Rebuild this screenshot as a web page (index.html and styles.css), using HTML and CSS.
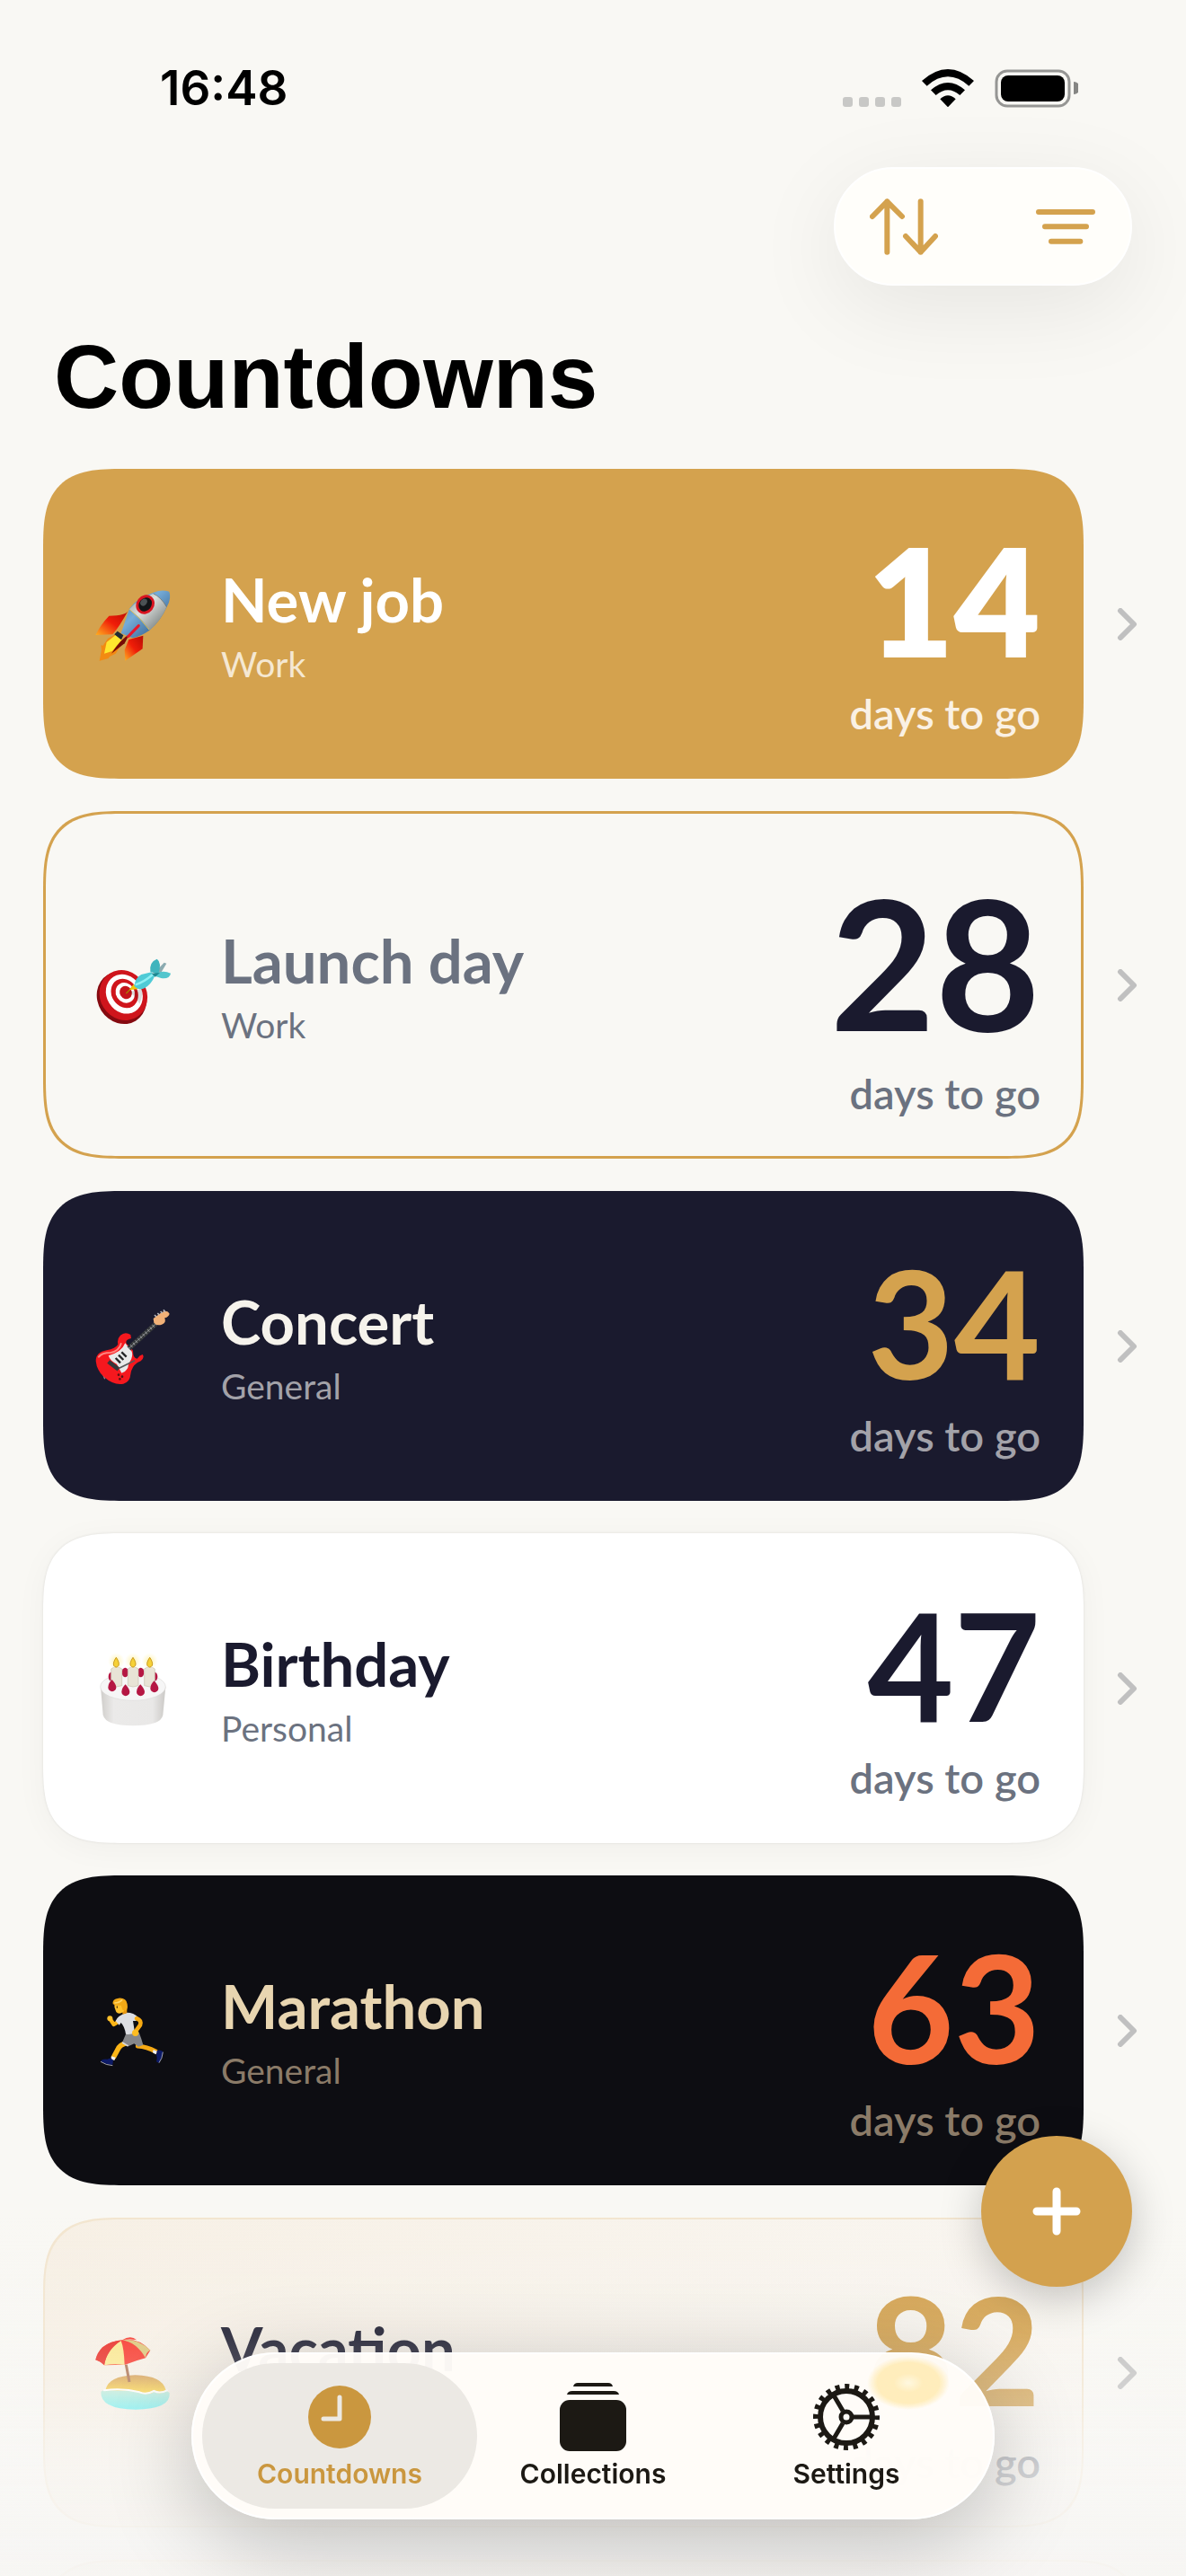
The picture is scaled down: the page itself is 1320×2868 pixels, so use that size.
FILE: index.html
```
<!DOCTYPE html>
<html lang="en">
<head>
    <meta charset="UTF-8">
    <meta name="viewport" content="width=device-width, initial-scale=1.0">
    <title>Countdowns</title>
    <link rel="stylesheet" href="styles.css">
</head>
<body>
    <div class="screen">
        <header class="status-bar">
            <span class="status-time">16:48</span>
            <div class="status-icons">
                <svg width="65" height="42" viewBox="0 0 65 42" fill="#c8c8c6">
                    <rect x="0" y="31" width="11" height="11" rx="3"/>
                    <rect x="18" y="31" width="11" height="11" rx="3"/>
                    <rect x="36" y="31" width="11" height="11" rx="3"/>
                    <rect x="54" y="31" width="11" height="11" rx="3"/>
                </svg>
                <svg width="58" height="42" viewBox="0 0 174 126">
                    <path d="M0 39Q87 -39 174 39L157 56Q87 -6 17 56Z"/>
                    <path d="M30 70Q87 20 144 70L127 87Q87 52 47 87Z"/>
                    <path d="M61 100Q87 76 113 100L87 127Z"/>
                </svg>
                <svg width="93" height="43" viewBox="0 0 93 43">
                    <rect x="2" y="2" width="81" height="39" rx="12" fill="none" stroke="#969694" stroke-width="3"/>
                    <rect x="7" y="7" width="71" height="29" rx="8"/>
                    <path d="M88 14a7 7 0 0 1 0 14z" fill="#868684"/>
                </svg>
            </div>
        </header>

        <div class="toolbar">
            <div class="toolbar-group">
                <button class="tool-btn" aria-label="Sort">
                    <svg width="76" height="63" viewBox="0 0 228 189">
                        <path d="M58 179V10M9 60L58 10L108 60M170 10V179M120 126L170 179L219 126"/>
                    </svg>
                </button>
                <button class="tool-btn" aria-label="Filter">
                    <svg width="76" height="63" viewBox="0 0 228 189">
                        <path d="M24 45H204M45 94H183M66 143H163"/>
                    </svg>
                </button>
            </div>
        </div>

        <h1 class="page-title">Countdowns</h1>

        <main class="list">
            <a class="row" href="#new-job">
                <article class="card card-gold">
                    <!-- rocket -->
                    <svg class="emoji" viewBox="54 14 300 300">
                        <defs>
                            <linearGradient id="hull" x1="0" y1="0" x2="1" y2="1">
                                <stop offset="0" stop-color="#8d9698"/>
                                <stop offset=".4" stop-color="#dcdfdc"/>
                                <stop offset="1" stop-color="#626b6b"/>
                            </linearGradient>
                            <linearGradient id="blue" x1="0" y1="0" x2="1" y2="1">
                                <stop offset="0" stop-color="#3c76b0"/>
                                <stop offset=".4" stop-color="#76acd8"/>
                                <stop offset="1" stop-color="#1d4674"/>
                            </linearGradient>
                            <linearGradient id="fin" x1="1" y1="0" x2="0" y2="1">
                                <stop offset="0" stop-color="#b80c04"/>
                                <stop offset=".5" stop-color="#f01d08"/>
                                <stop offset="1" stop-color="#ffb020"/>
                            </linearGradient>
                        </defs>
                        <path d="M188 118Q182 135 124 136Q96 165 79 200L136 198Q160 170 188 118Z" fill="url(#fin)"/>
                        <path d="M190 215L238 202L236 246L178 286L176 250Z" fill="url(#fin)"/>
                        <path d="M146 198L120 212L104 235L97 234L99 250L92 286L122 278L126 272L146 262L172 222Z" fill="#f28a12"/>
                        <path d="M146 200L116 224L108 262L134 254L168 218Z" fill="#ffe62e"/>
                        <path d="M192 112Q215 78 272 58Q300 47 325 55Q333 76 318 104Q296 154 258 185Q230 205 202 210L164 194Z" fill="url(#blue)"/>
                        <path d="M192 114Q222 78 272 62Q298 73 316 106Q298 150 260 184Q236 148 192 114Z" fill="url(#hull)"/>
                        <path d="M192 114Q230 144 258 182" fill="none" stroke="#e2c050" stroke-width="3"/>
                        <path d="M272 62Q298 74 316 106" fill="none" stroke="#70695b" stroke-width="2"/>
                        <path d="M142 198L152 187L172 201L165 216Z" fill="#1f2c34"/>
                        <path d="M132 262Q164 212 192 198L176 228Z" fill="#780a04"/>
                        <path d="M188 205L223 169" stroke="#e8182a" stroke-width="9" stroke-linecap="round"/>
                        <ellipse cx="245" cy="98" rx="25" ry="29" transform="rotate(38 245 98)" fill="#121517" stroke="#d81420" stroke-width="9"/>
                        <ellipse cx="240" cy="91" rx="10" ry="13" transform="rotate(38 240 91)" fill="#4b5254"/>
                    </svg>
                    <div class="info">
                        <h2 class="name">New job</h2>
                        <p class="category">Work</p>
                    </div>
                    <div class="count">
                        <span class="number">14</span>
                        <span class="unit">days to go</span>
                    </div>
                </article>
                <svg class="chevron" viewBox="0 0 36 36"><path d="M11 3L26 18L11 33"/></svg>
            </a>

            <a class="row" href="#launch-day">
                <article class="card card-outline">
                    <!-- target with dart -->
                    <svg class="emoji" viewBox="54 20 300 300">
                        <ellipse cx="166" cy="212" rx="80" ry="90" transform="rotate(-32 166 212)" fill="#850a10"/>
                        <ellipse cx="172" cy="203" rx="78" ry="86" transform="rotate(-32 172 203)" fill="#cf151c"/>
                        <ellipse cx="175" cy="199" rx="59" ry="68" transform="rotate(-32 175 199)" fill="#fff"/>
                        <ellipse cx="176" cy="197" rx="43" ry="51" transform="rotate(-32 176 197)" fill="#cf151c"/>
                        <ellipse cx="178" cy="195" rx="31" ry="35" transform="rotate(-32 178 195)" fill="#fff"/>
                        <ellipse cx="180" cy="194" rx="20" ry="22" transform="rotate(-32 180 194)" fill="#c4141b"/>
                        <path d="M190 190Q218 190 232 178Q240 200 226 232Q214 208 190 190Z" fill="#000" opacity=".14"/>
                        <path d="M182 196L206 172" stroke="#a87f00" stroke-width="4" stroke-linecap="round"/>
                        <path d="M192 186L206 166L222 182Z" fill="#f0c60c"/>
                        <path d="M208 172Q212 144 232 134L266 126L276 140Q266 166 242 180Q222 188 208 172Z" fill="#4fcbd6"/>
                        <path d="M212 168Q240 160 270 134" fill="none" stroke="#8ff0f4" stroke-width="7"/>
                        <path d="M276 128L308 94L316 97L294 134Z" fill="#8babb0"/>
                        <path d="M262 124Q258 92 284 82Q302 94 288 134Z" fill="#3fb4bd"/>
                        <path d="M272 138Q298 116 330 130Q326 150 298 146Z" fill="#53c6cd"/>
                        <path d="M266 130L294 128L278 142Z" fill="#1f8891"/>
                    </svg>
                    <div class="info">
                        <h2 class="name">Launch day</h2>
                        <p class="category">Work</p>
                    </div>
                    <div class="count">
                        <span class="number number-large">28</span>
                        <span class="unit">days to go</span>
                    </div>
                </article>
                <svg class="chevron" viewBox="0 0 36 36"><path d="M11 3L26 18L11 33"/></svg>
            </a>

            <a class="row" href="#concert">
                <article class="card card-navy">
                    <!-- guitar -->
                    <svg class="emoji" viewBox="54 55 300 300">
                        <path d="M104 298L110 314" stroke="#8a8a90" stroke-width="4"/>
                        <path d="M196 166Q178 154 162 168Q150 180 154 198Q146 212 116 218Q80 224 80 254Q82 284 108 308Q140 336 172 330Q194 324 196 298Q200 266 230 254Q244 242 236 232Q226 234 218 246Q204 246 204 220Q196 204 184 198Q174 184 198 178Z" fill="#f5181e"/>
                        <path d="M90 240Q100 226 130 226Q158 220 164 196" fill="none" stroke="#ff8580" stroke-width="6" stroke-linecap="round"/>
                        <path d="M178 194Q166 224 122 236Q128 254 150 264L166 294Q188 288 190 262Q206 240 200 222Z" fill="#e8e9ea"/>
                        <path d="M190 212L280 130" stroke="#323538" stroke-width="17"/>
                        <path d="M190 212L280 130" stroke="#a3a5a6" stroke-width="11" stroke-dasharray="2 9"/>
                        <path d="M190 212L280 130" stroke="#b5b7b8" stroke-width="2"/>
                        <path d="M166 224L182 240M156 234L172 250M146 244L162 260" stroke="#242629" stroke-width="7"/>
                        <path d="M122 256L156 282" stroke="#35373b" stroke-width="14"/>
                        <path d="M158 278L210 252" stroke="#58595c" stroke-width="5"/>
                        <path d="M272 112L296 94Q318 80 326 96Q324 106 310 110Q316 128 300 132Q284 138 274 126Z" fill="#f0b077"/>
                        <path d="M276 100L282 106M286 94L292 100M296 88L302 94M306 83L311 90" stroke="#b8b8bd" stroke-width="5"/>
                        <circle cx="156" cy="300" r="4" fill="#5c1013"/>
                        <circle cx="168" cy="306" r="4" fill="#5c1013"/>
                        <circle cx="160" cy="314" r="4" fill="#5c1013"/>
                    </svg>
                    <div class="info">
                        <h2 class="name">Concert</h2>
                        <p class="category">General</p>
                    </div>
                    <div class="count">
                        <span class="number">34</span>
                        <span class="unit">days to go</span>
                    </div>
                </article>
                <svg class="chevron" viewBox="0 0 36 36"><path d="M11 3L26 18L11 33"/></svg>
            </a>

            <a class="row" href="#birthday">
                <article class="card card-white">
                    <!-- cake -->
                    <svg class="emoji" viewBox="54 58 300 300">
                        <defs>
                            <linearGradient id="cake" x1="0" y1="0" x2="1" y2="0">
                                <stop offset="0" stop-color="#cfcdca"/>
                                <stop offset=".2" stop-color="#ebeae9"/>
                                <stop offset=".8" stop-color="#e9e8e7"/>
                                <stop offset="1" stop-color="#cbc9c6"/>
                            </linearGradient>
                            <radialGradient id="glow">
                                <stop offset="0" stop-color="#fff09a"/>
                                <stop offset="1" stop-color="#fff8d0" stop-opacity="0"/>
                            </radialGradient>
                        </defs>
                        <path d="M96 202L104 296Q112 332 204 332Q298 332 304 296L313 202Z" fill="url(#cake)"/>
                        <ellipse cx="204" cy="202" rx="109" ry="46" fill="#f6f6f6" stroke="#dddbd9" stroke-width="2"/>
                        <g fill="#b51743">
                            <ellipse cx="132" cy="168" rx="10" ry="15"/>
                            <ellipse cx="178" cy="154" rx="11" ry="16"/>
                            <ellipse cx="230" cy="154" rx="11" ry="16"/>
                            <ellipse cx="276" cy="168" rx="10" ry="15"/>
                        </g>
                        <g fill="#e8e4d6" stroke="#c7c2b1" stroke-width="2">
                            <path d="M131 142Q148 128 167 142V198Q148 206 131 198Z"/>
                            <path d="M187 142Q204 128 222 142V198Q204 206 187 198Z"/>
                            <path d="M242 142Q260 128 277 142V198Q260 206 242 198Z"/>
                        </g>
                        <g fill="#b51743">
                            <path d="M134 178Q148 194 148 204A13 13 0 0 1 121 204Q121 190 134 178Z"/>
                            <path d="M179 194Q193 210 193 219A13 13 0 0 1 166 219Q166 206 179 194Z"/>
                            <path d="M229 194Q243 210 243 219A13 13 0 0 1 216 219Q216 206 229 194Z"/>
                            <path d="M275 182Q289 198 289 207A13 13 0 0 1 262 207Q262 194 275 182Z"/>
                        </g>
                        <circle cx="148" cy="116" r="28" fill="url(#glow)"/>
                        <circle cx="204" cy="116" r="28" fill="url(#glow)"/>
                        <circle cx="260" cy="116" r="28" fill="url(#glow)"/>
                        <g fill="#f6d136" stroke="#c9981c" stroke-width="3">
                            <path d="M148 104Q160 122 156 131Q148 142 140 131Q136 122 148 104Z"/>
                            <path d="M204 104Q216 122 212 131Q204 142 196 131Q192 122 204 104Z"/>
                            <path d="M260 104Q272 122 268 131Q260 142 252 131Q248 122 260 104Z"/>
                        </g>
                    </svg>
                    <div class="info">
                        <h2 class="name">Birthday</h2>
                        <p class="category">Personal</p>
                    </div>
                    <div class="count">
                        <span class="number">47</span>
                        <span class="unit">days to go</span>
                    </div>
                </article>
                <svg class="chevron" viewBox="0 0 36 36"><path d="M11 3L26 18L11 33"/></svg>
            </a>

            <a class="row" href="#marathon">
                <article class="card card-black">
                    <!-- runner -->
                    <svg class="emoji" viewBox="54 61 300 300">
                        <path d="M220 262Q250 264 280 280" fill="none" stroke="#f5a914" stroke-width="15" stroke-linecap="round"/>
                        <path d="M180 252Q160 258 154 272L140 298" fill="none" stroke="#fbb517" stroke-width="17" stroke-linecap="round"/>
                        <path d="M272 274L286 280L280 290L270 284ZM132 296L146 300L142 310L130 306Z" fill="#f0f0f4"/>
                        <path d="M284 278Q292 272 304 280Q302 304 290 318L282 314Q286 300 282 292Z" fill="#0d1a66"/>
                        <path d="M304 282Q302 304 291 318" fill="none" stroke="#e8e8f0" stroke-width="2"/>
                        <path d="M96 312Q102 304 118 306L130 302L138 310L136 324Q114 324 96 312Z" fill="#0d1a66"/>
                        <path d="M96 314Q114 326 136 327" fill="none" stroke="#e8e8f0" stroke-width="2"/>
                        <path d="M180 222L224 216Q232 236 238 258L222 264L208 254L190 262L168 250Z" fill="#86878a"/>
                        <path d="M168 250L188 262" stroke="#d8d8da" stroke-width="5"/>
                        <path d="M162 176L140 190L128 172" fill="none" stroke="#fbb517" stroke-width="13" stroke-linejoin="round"/>
                        <circle cx="127" cy="170" r="9" fill="#ffc02a"/>
                        <path d="M146 178Q152 160 184 150Q206 150 222 166L214 178L204 178L210 216Q196 226 180 222Q176 196 164 184L158 192Z" fill="#dcdde2"/>
                        <path d="M216 170Q234 176 228 192L212 214" fill="none" stroke="#f7aa12" stroke-width="14" stroke-linecap="round"/>
                        <circle cx="212" cy="218" r="11" fill="#ffbd22"/>
                        <path d="M166 136L184 138L184 152L170 156Z" fill="#e8960e"/>
                        <path d="M142 118Q140 134 148 148Q156 158 172 148L182 128L170 108Z" fill="#ffc02a"/>
                        <path d="M137 122Q134 104 156 102Q182 100 185 122Q188 140 180 144L170 142L164 126Q150 128 137 122Z" fill="#f2a916"/>
                        <path d="M142 118Q158 118 168 108" fill="none" stroke="#ffd667" stroke-width="5"/>
                        <ellipse cx="151" cy="132" rx="2" ry="4" fill="#5a3708"/>
                    </svg>
                    <div class="info">
                        <h2 class="name">Marathon</h2>
                        <p class="category">General</p>
                    </div>
                    <div class="count">
                        <span class="number">63</span>
                        <span class="unit">days to go</span>
                    </div>
                </article>
                <svg class="chevron" viewBox="0 0 36 36"><path d="M11 3L26 18L11 33"/></svg>
            </a>

            <a class="row" href="#vacation">
                <article class="card card-sand">
                    <!-- beach umbrella -->
                    <svg class="emoji" viewBox="54 64 300 300">
                        <defs>
                            <linearGradient id="sea" x1="0" y1="0" x2="0" y2="1">
                                <stop offset="0" stop-color="#cfe9d2"/>
                                <stop offset="1" stop-color="#6bf0f2"/>
                            </linearGradient>
                            <linearGradient id="sand" x1="0" y1="0" x2="0" y2="1">
                                <stop offset="0" stop-color="#d39a52"/>
                                <stop offset="1" stop-color="#ffd83c"/>
                            </linearGradient>
                        </defs>
                        <path d="M97 276Q118 262 212 260Q304 262 326 280Q332 334 212 336Q94 334 97 276Z" fill="url(#sea)"/>
                        <path d="M112 272Q120 224 212 221Q304 224 314 272Q296 288 276 276Q254 290 232 278Q170 270 112 272Z" fill="url(#sand)"/>
                        <path d="M108 272Q170 264 226 278Q248 288 274 274Q294 284 318 272" fill="none" stroke="#fff" stroke-width="6" stroke-linecap="round"/>
                        <path d="M181 186L192 244" stroke="#a86a48" stroke-width="9"/>
                        <path d="M79 170Q98 112 164 104Q222 94 262 138L246 164Q216 172 178 186Q146 186 108 188Q96 176 79 170Z" fill="#f83226"/>
                        <path d="M164 106Q116 134 108 188Q142 182 176 187Q174 130 164 106Z" fill="#fbe88e"/>
                        <path d="M164 106Q130 106 102 128Q84 146 79 170Q92 172 108 188Q116 138 164 106Z" fill="#e92820"/>
                        <path d="M168 104Q200 100 228 114Q248 122 262 138Q246 144 246 164Q216 112 168 104Z" fill="#dcc678"/>
                        <path d="M168 104Q196 86 216 103Q190 100 168 104Z" fill="#f83226"/>
                    </svg>
                    <div class="info">
                        <h2 class="name">Vacation</h2>
                    </div>
                    <div class="count">
                        <span class="number">82</span>
                        <span class="unit">days to go</span>
                    </div>
                </article>
                <svg class="chevron" viewBox="0 0 36 36"><path d="M11 3L26 18L11 33"/></svg>
            </a>

            <div class="row">
                <article class="card card-sand"></article>
            </div>
        </main>
    </div>

    <div class="fade"></div>

    <button class="fab" aria-label="Add countdown">
        <svg width="54" height="54" viewBox="0 0 54 54"><path d="M27 5V49M5 27H49"/></svg>
    </button>

    <nav class="tab-bar">
        <a class="tab tab-active" href="#countdowns">
            <svg width="76" height="78" viewBox="0 0 76 78">
                <circle cx="38" cy="39" r="35" fill="#ca973f"/>
                <path d="M38 17V41H20" fill="none" stroke="#ece9e4" stroke-width="5" stroke-linecap="round" stroke-linejoin="round"/>
            </svg>
            <span>Countdowns</span>
        </a>
        <a class="tab" href="#collections">
            <svg width="76" height="78" viewBox="0 0 76 78" fill="#1c1914">
                <path d="M16 5Q17 1 21 1H55Q59 1 60 5ZM9 14Q10 10 15 10H61Q66 10 67 14Z"/>
                <rect x="1" y="20" width="74" height="57" rx="11"/>
            </svg>
            <span>Collections</span>
        </a>
        <a class="tab" href="#settings">
            <svg width="76" height="78" viewBox="-38 -39 76 78" fill="none" stroke="#1c1914">
                <circle r="34" stroke-width="6" stroke-dasharray="5 5.68" stroke-dashoffset="2"/>
                <circle r="29" stroke-width="6"/>
                <circle r="6" stroke-width="5"/>
                <path d="M8 0H27M-4 -7L-14 -24M-4 7L-14 24" stroke-width="5"/>
            </svg>
            <span>Settings</span>
        </a>
    </nav>
</body>
</html>
```
FILE: styles.css
```
*{
    margin: 0;
    padding: 0;
    box-sizing: border-box;
}
body{
    background-color: #f9f8f4;
    color: #000;
    font-family: Lato, "Liberation Sans", sans-serif;
}
a{
    color: inherit;
    text-decoration: none;
}
button{
    border: none;
    background: none;
    cursor: pointer;
}
.screen{
    height: 100vh;
    overflow: hidden;
    padding: 0 48px;
}

/* status bar */
.status-bar{
    display: flex;
    justify-content: space-between;
    align-items: center;
    height: 186px;
    padding: 10px 72px 0 130px;
}
.status-time{
    font-family: Inter, sans-serif;
    font-size: 53px;
    font-weight: 600;
}
.status-icons{
    display: flex;
    align-items: center;
    gap: 23px;
}

/* toolbar */
.toolbar{
    display: flex;
    justify-content: flex-end;
    padding-right: 12px;
}
.toolbar-group{
    display: flex;
    justify-content: space-between;
    align-items: center;
    width: 332px;
    height: 132px;
    padding: 0 34px 0 38px;
    border: 2px solid #fff;
    border-radius: 66px;
    background: #fffefa;
    box-shadow: 0 24px 100px rgba(0,0,0,.08);
}
.tool-btn{
    display: flex;
}
.tool-btn path{
    fill: none;
    stroke: #d4a24e;
    stroke-width: 18;
    stroke-linecap: round;
    stroke-linejoin: round;
}
.page-title{
    padding: 40px 12px 42px;
    font-family: "Liberation Sans", Arial, sans-serif;
    font-size: 100px;
    font-weight: 700;
    line-height: 122px;
}

/* list */
.list{
    display: flex;
    flex-direction: column;
    gap: 36px;
}
.row{
    display: flex;
    align-items: center;
    gap: 30px;
}
.card{
    flex: 1;
    display: flex;
    align-items: center;
    min-height: 345px;
    padding: 0 48px 0 50px;
    border-radius: 66px;
}
@supports (corner-shape: superellipse(1.6)){
    .card{
        border-radius: 90px;
        corner-shape: superellipse(1.6);
    }
}
.emoji{
    width: 100px;
    height: 100px;
}
.info{
    flex: 1;
    min-height: 144px;
    padding-left: 48px;
}
.name{
    font-size: 67px;
    font-weight: 700;
    line-height: 88px;
}
.category{
    font-size: 39px;
    line-height: 56px;
}
.count{
    display: flex;
    flex-direction: column;
    align-items: flex-end;
    padding: 40px 0 53px;
}
.number{
    font-size: 166px;
    font-weight: 700;
    line-height: 212px;
}
.number-large{
    font-size: 202px;
    line-height: 254px;
}
.unit{
    font-size: 47px;
    font-weight: 600;
    line-height: 40px;
}
.chevron{
    width: 36px;
    height: 36px;
    fill: none;
    stroke: #c0c0c0;
    stroke-width: 6;
    stroke-linecap: round;
    stroke-linejoin: round;
}
.card-gold{
    background: #d4a24e;
    color: #fff;
}
.card-gold .category{
    color: #f5e8d2;
}
.card-gold .unit{
    color: #faf1e4;
}
.card-gold .number{
    font-weight: 800;
}
.card-outline{
    border: 3px solid #d4a24e;
    padding: 0 45px 0 47px;
    color: #6b7280;
}
.card-outline .count{
    padding: 37px 0 50px;
}
.card-outline .number{
    color: #1a1a2e;
}
.card-navy{
    background: #1a1a2e;
    color: #f6f3ec;
}
.card-navy .category,
.card-navy .unit{
    color: #a3a2a9;
}
.card-navy .number{
    color: #d4a24e;
}
.card-white{
    background: #fff;
    color: #1a1a2e;
    box-shadow: 0 6px 36px rgba(0,0,0,.04), 0 0 3px rgba(0,0,0,.1);
}
.card-white .category,
.card-white .unit{
    color: #6b7280;
}
.card-black{
    background: #0d0d12;
    color: #e8d5b0;
}
.card-black .category,
.card-black .unit{
    color: #8b7b68;
}
.card-black .number{
    color: #f46b37;
}
.card-sand{
    background: linear-gradient(90deg, #f7f0e5, #f9f6f1);
    box-shadow: inset 0 0 0 2px #f3e6d0;
    color: #1a1a2e;
}
.card-sand .unit{
    color: #6b7280;
}
.card-sand .number{
    color: #d4a24e;
}

/* overlays */
.fade{
    position: fixed;
    left: 0;
    right: 0;
    bottom: 0;
    height: 400px;
    background: linear-gradient(rgba(248,247,245,0), rgba(248,247,245,.14) 33%, rgba(248,247,245,.38) 53%, rgba(248,247,245,.72) 70%, rgba(246,245,243,.9));
    pointer-events: none;
}
.fab{
    position: fixed;
    right: 60px;
    bottom: 322px;
    display: flex;
    align-items: center;
    justify-content: center;
    width: 168px;
    height: 168px;
    border-radius: 50%;
    background: #d3a14e;
    box-shadow: 0 12px 48px rgba(0,0,0,.22);
}
.fab path{
    stroke: #fff;
    stroke-width: 9;
    stroke-linecap: round;
}
.tab-bar{
    position: fixed;
    left: 213px;
    right: 213px;
    bottom: 63px;
    display: flex;
    height: 186px;
    padding: 10px 22px;
    border: 2px solid #fff;
    border-radius: 93px;
    background: radial-gradient(46px 30px at 796px 32px, #fff8e0 0, #ffedbc 35%, #ffedbc 75%, rgba(255,237,188,0) 100%), rgba(255,252,248,.97);
    box-shadow: 0 24px 100px rgba(0,0,0,.24);
}
.tab{
    flex: 1;
    display: flex;
    flex-direction: column;
    align-items: center;
    margin: 0 -12px;
    padding-top: 21px;
    border-radius: 81px;
    font-family: Inter, sans-serif;
    font-size: 30px;
    font-weight: 600;
    line-height: 36px;
    gap: 6px;
    color: #1c1914;
}
.tab-active{
    background: #ece9e4;
    color: #ca973f;
}
```
